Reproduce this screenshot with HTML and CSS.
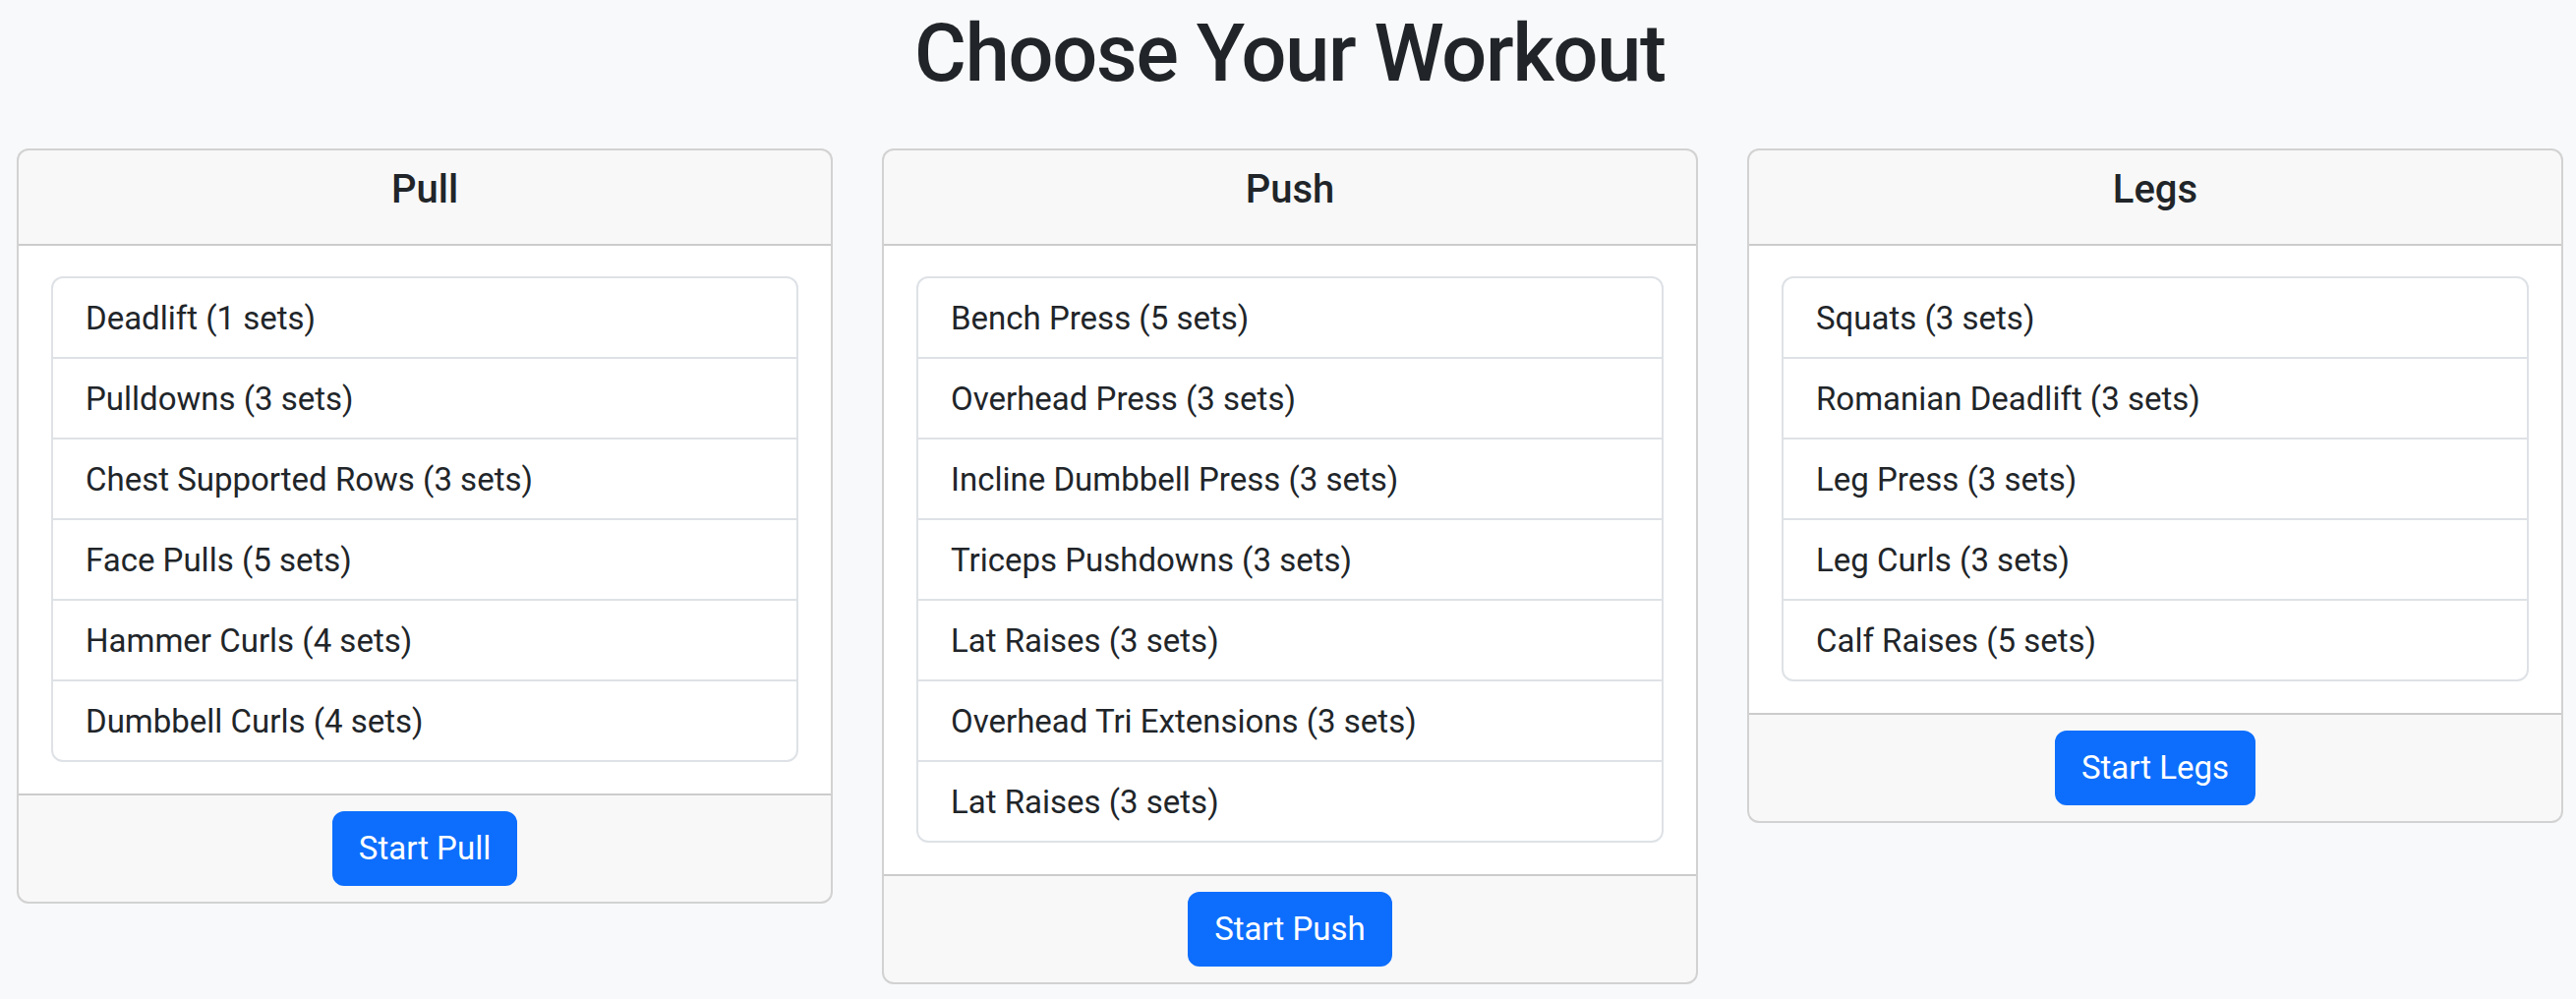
FILE: index.html
```html
<!DOCTYPE html>
<html lang="en">
<head>
<meta charset="utf-8">
<title>Choose Your Workout</title>
<link rel="stylesheet" href="styles.css">
</head>
<body>
<main class="page">
  <h1 class="title">Choose Your Workout</h1>
  <div class="cards">
    <section class="card">
      <header class="card-header"><h5 class="card-title">Pull</h5></header>
      <div class="card-body">
        <ul class="list">
          <li class="item">Deadlift (1 sets)</li>
          <li class="item">Pulldowns (3 sets)</li>
          <li class="item">Chest Supported Rows (3 sets)</li>
          <li class="item">Face Pulls (5 sets)</li>
          <li class="item">Hammer Curls (4 sets)</li>
          <li class="item">Dumbbell Curls (4 sets)</li>
        </ul>
      </div>
      <footer class="card-footer"><button class="btn">Start Pull</button></footer>
    </section>
    <section class="card">
      <header class="card-header"><h5 class="card-title">Push</h5></header>
      <div class="card-body">
        <ul class="list">
          <li class="item">Bench Press (5 sets)</li>
          <li class="item">Overhead Press (3 sets)</li>
          <li class="item">Incline Dumbbell Press (3 sets)</li>
          <li class="item">Triceps Pushdowns (3 sets)</li>
          <li class="item">Lat Raises (3 sets)</li>
          <li class="item">Overhead Tri Extensions (3 sets)</li>
          <li class="item">Lat Raises (3 sets)</li>
        </ul>
      </div>
      <footer class="card-footer"><button class="btn">Start Push</button></footer>
    </section>
    <section class="card">
      <header class="card-header"><h5 class="card-title">Legs</h5></header>
      <div class="card-body">
        <ul class="list">
          <li class="item">Squats (3 sets)</li>
          <li class="item">Romanian Deadlift (3 sets)</li>
          <li class="item">Leg Press (3 sets)</li>
          <li class="item">Leg Curls (3 sets)</li>
          <li class="item">Calf Raises (5 sets)</li>
        </ul>
      </div>
      <footer class="card-footer"><button class="btn">Start Legs</button></footer>
    </section>
  </div>
</main>
</body>
</html>
```

FILE: styles.css
```css
* { box-sizing: border-box; }

html, body {
  margin: 0;
  padding: 0;
}

body {
  background: #f8f9fa;
  color: #212529;
  font-family: Roboto, "Liberation Sans", Arial, sans-serif;
  font-size: 33px;
  line-height: 1.5;
}

.page {
  padding: 0 13px 0 17px;
}

.title {
  margin: 6px 0 47px;
  font-size: 81px;
  line-height: 98px;
  font-weight: 500;
  letter-spacing: -1.2px;
  text-align: center;
}

.cards {
  display: flex;
  align-items: flex-start;
  gap: 50px;
}

.card {
  flex: 1 1 0;
  min-width: 0;
  background: #fff;
  border: 2px solid rgba(0, 0, 0, 0.175);
  border-radius: 12px;
  overflow: hidden;
}

.card-header {
  background: rgba(33, 37, 41, 0.03);
  border-bottom: 2px solid rgba(0, 0, 0, 0.175);
  padding: 16px 33px;
  text-align: center;
}

.card-title {
  margin: 0 0 15px;
  font-size: 40px;
  line-height: 48px;
  font-weight: 500;
}

.card-body {
  padding: 31px 33px 32px;
}

.list {
  list-style: none;
  margin: 0;
  padding: 0;
  border: 2px solid #dee2e6;
  border-radius: 12px;
  overflow: hidden;
}

.item {
  padding: 15.5px 33px;
  line-height: 49px;
  font-size: 33px;
  border-top: 2px solid #dee2e6;
}

.item:first-child {
  border-top: 0;
}

.card-footer {
  background: rgba(33, 37, 41, 0.03);
  border-top: 2px solid rgba(0, 0, 0, 0.175);
  padding: 15.5px 33px 16px;
  text-align: center;
}

.btn {
  display: inline-block;
  font-family: inherit;
  font-size: 33px;
  line-height: 48px;
  color: #fff;
  background: #0d6efd;
  border: 2px solid #0d6efd;
  border-radius: 12px;
  padding: 12px 25px;
  cursor: pointer;
}
```
